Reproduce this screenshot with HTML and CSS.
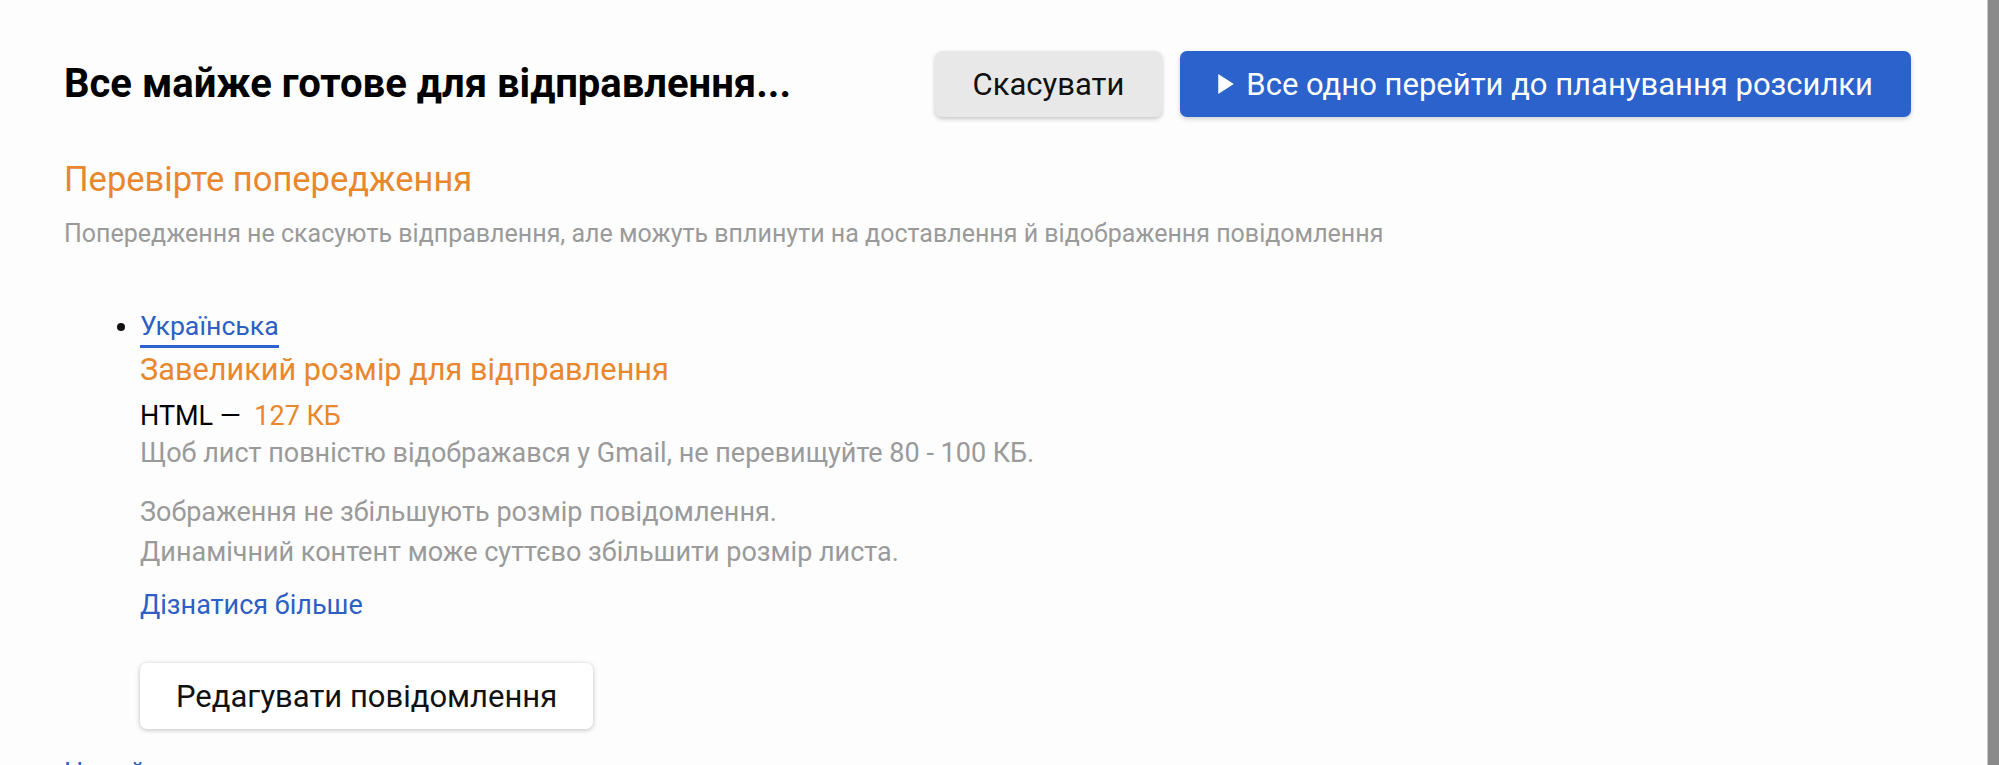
FILE: index.html
```html
<!DOCTYPE html>
<html lang="uk">
<head>
<meta charset="utf-8">
<title>Все майже готове для відправлення</title>
<link rel="stylesheet" href="styles.css">
</head>
<body>
<div class="page">
  <main class="main">
    <header class="header">
      <h1 class="title">Все майже готове для відправлення...</h1>
      <div class="actions">
        <button class="btn btn-cancel">Скасувати</button>
        <button class="btn btn-primary"><svg class="play" viewBox="0 0 14 18" width="16" height="20"><polygon points="0,0 14,9 0,18" fill="#fff"/></svg>Все одно перейти до планування розсилки</button>
      </div>
    </header>

    <h2 class="warn-title">Перевірте попередження</h2>
    <p class="warn-sub">Попередження не скасують відправлення, але можуть вплинути на доставлення й відображення повідомлення</p>

    <ul class="langs">
      <li class="lang">
        <a class="lang-link" href="#">Українська</a>
        <div class="issue-title">Завеликий розмір для відправлення</div>
        <div class="size-line">HTML —&nbsp; <span class="size">127 КБ</span></div>
        <p class="note">Щоб лист повністю відображався у Gmail, не перевищуйте 80 - 100 КБ.</p>
        <p class="note note-gap">Зображення не збільшують розмір повідомлення.<br>Динамічний контент може суттєво збільшити розмір листа.</p>
        <a class="more" href="#">Дізнатися більше</a>
        <div><button class="btn btn-edit">Редагувати повідомлення</button></div>
      </li>
    </ul>
    <a class="bottom-link" href="#">Новий лист</a>
  </main>
  <div class="scroll-edge"></div>
</div>
</body>
</html>
```

FILE: styles.css
```css
* { box-sizing: border-box; }

html, body {
  margin: 0;
  padding: 0;
  height: 100%;
  overflow: hidden;
}

body {
  background: #fdfdfd;
  font-family: Roboto, "Liberation Sans", Arial, sans-serif;
  color: #111;
}

.page {
  display: flex;
  height: 765px;
}

.main {
  flex: 1;
  padding: 51px 76px 0 64px;
}

.scroll-edge {
  width: 12px;
  background: #8a8a8a;
  border-left: 1px solid #c9c9c9;
}

.header {
  display: flex;
  align-items: center;
  justify-content: space-between;
  height: 66px;
}

.title {
  margin: 0;
  font-size: 40px;
  font-weight: 700;
  color: #000;
  line-height: 46px;
}

.actions {
  display: flex;
  gap: 18px;
}

.btn {
  font-family: Roboto, "Liberation Sans", Arial, sans-serif;
  font-size: 31px;
  height: 66px;
  padding: 0 38px;
  border: none;
  border-radius: 7px;
  cursor: pointer;
  display: inline-flex;
  align-items: center;
}

.btn-cancel {
  background: #e8e8e8;
  color: #111;
  box-shadow: 0 2px 4px rgba(0,0,0,0.22);
}

.btn-primary {
  background: #2b62cb;
  color: #fff;
  box-shadow: 0 2px 5px rgba(0,0,0,0.18);
}

.play {
  margin-right: 12px;
}

.warn-title {
  margin: 42px 0 0;
  font-size: 34.5px;
  font-weight: 400;
  line-height: 40px;
  color: #e8872e;
}

.warn-sub {
  margin: 20px 0 0;
  font-size: 25px;
  line-height: 30px;
  color: #9a9a9a;
}

.langs {
  margin: 61px 0 0;
  padding-left: 76px;
  font-size: 27px;
}

.lang-link {
  display: inline-block;
  font-size: 26.7px;
  color: #2d5fc4;
  text-decoration: none;
  line-height: 30px;
  padding-bottom: 4px;
  border-bottom: 3px solid #2d62cf;
}

.issue-title {
  margin-top: 4px;
  font-size: 30.7px;
  line-height: 36px;
  color: #e8872e;
}

.size-line {
  margin-top: 12px;
  line-height: 32px;
  color: #000;
}

.size {
  color: #e8872e;
}

.note {
  margin: 1px 0 0;
  line-height: 40px;
  color: #9a9a9a;
}

.note-gap {
  margin-top: 19px;
}

.more {
  display: block;
  margin-top: 17px;
  line-height: 32px;
  color: #2d5fc4;
  text-decoration: none;
}

.btn-edit {
  margin-top: 42px;
  background: #fff;
  color: #111;
  padding: 0 36px;
  box-shadow: 0 1px 5px rgba(0,0,0,0.25);
}

.bottom-link {
  display: block;
  margin-top: 28px;
  font-size: 27px;
  line-height: 32px;
  color: #2d5fc4;
  text-decoration: none;
}
```
